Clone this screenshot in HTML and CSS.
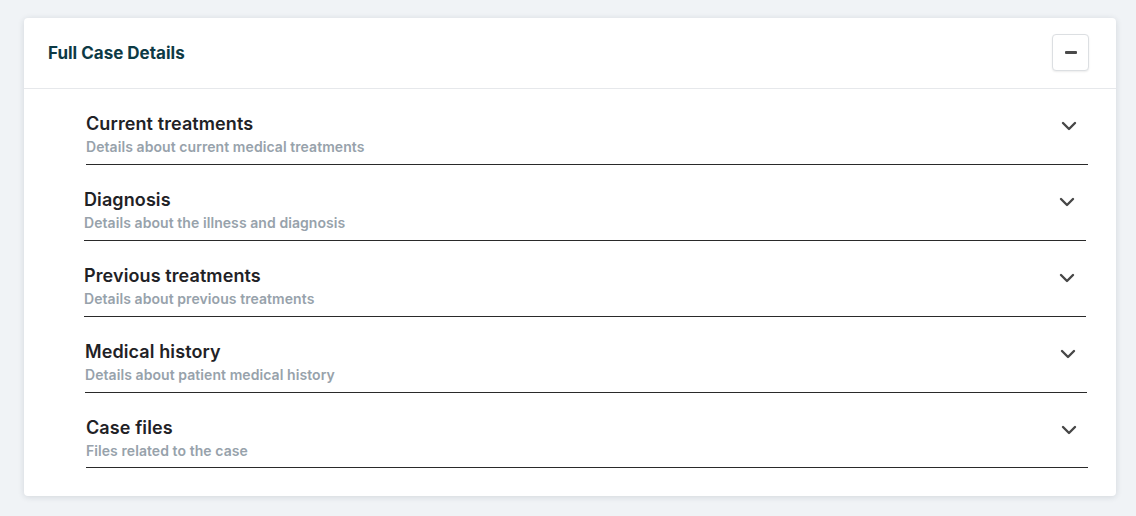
FILE: index.html
```html
<!DOCTYPE html>
<html lang="en">
<head>
<meta charset="utf-8">
<title>Full Case Details</title>
<link rel="stylesheet" href="styles.css">
</head>
<body>
<section class="card">
  <header class="card-header">
    <h2 class="card-title">Full Case Details</h2>
    <button class="collapse-btn" type="button" aria-label="Collapse"><span class="minus"></span></button>
  </header>
  <div class="sections">
    <div class="section">
      <div class="section-text">
        <div class="section-title">Current treatments</div>
        <div class="section-sub">Details about current medical treatments</div>
      </div>
      <svg class="chevron" viewBox="0 0 16 10" width="16" height="10"><path d="M2 2l6 6 6-6"/></svg>
    </div>
    <div class="section shift-2">
      <div class="section-text">
        <div class="section-title">Diagnosis</div>
        <div class="section-sub">Details about the illness and diagnosis</div>
      </div>
      <svg class="chevron" viewBox="0 0 16 10" width="16" height="10"><path d="M2 2l6 6 6-6"/></svg>
    </div>
    <div class="section shift-2">
      <div class="section-text">
        <div class="section-title">Previous treatments</div>
        <div class="section-sub">Details about previous treatments</div>
      </div>
      <svg class="chevron" viewBox="0 0 16 10" width="16" height="10"><path d="M2 2l6 6 6-6"/></svg>
    </div>
    <div class="section shift-1">
      <div class="section-text">
        <div class="section-title">Medical history</div>
        <div class="section-sub">Details about patient medical history</div>
      </div>
      <svg class="chevron" viewBox="0 0 16 10" width="16" height="10"><path d="M2 2l6 6 6-6"/></svg>
    </div>
    <div class="section section-last">
      <div class="section-text">
        <div class="section-title">Case files</div>
        <div class="section-sub">Files related to the case</div>
      </div>
      <svg class="chevron" viewBox="0 0 16 10" width="16" height="10"><path d="M2 2l6 6 6-6"/></svg>
    </div>
  </div>
</section>
</body>
</html>
```

FILE: styles.css
```css
* { box-sizing: border-box; }

html, body {
  margin: 0;
  background: #f0f3f6;
}

body {
  padding: 18px 20px 20px 24px;
  font-family: Inter, "Noto Sans", sans-serif;
}

.card {
  background: #ffffff;
  border-radius: 4px;
  box-shadow: 0 1px 6px rgba(30, 45, 60, 0.14);
  padding-bottom: 28px;
}

.card-header {
  height: 71px;
  display: flex;
  align-items: center;
  justify-content: space-between;
  padding: 0 27px 1px 24px;
  border-bottom: 1px solid #e6e8eb;
}

.card-title {
  margin: 0;
  font-size: 17px;
  font-weight: 700;
  color: #0d3a45;
}

.collapse-btn {
  width: 37px;
  height: 37px;
  background: #fff;
  border: 1px solid #dcdfe2;
  border-radius: 4px;
  box-shadow: 0 1px 2px rgba(0, 0, 0, 0.08);
  display: flex;
  align-items: center;
  justify-content: center;
  padding: 0;
}

.minus {
  display: block;
  width: 12px;
  height: 3px;
  border-radius: 1px;
  background: #4a4a4a;
}

.sections {
  padding: 0 28px 0 62px;
}

.section {
  display: flex;
  align-items: flex-start;
  justify-content: space-between;
  padding: 25px 0 9px;
  border-bottom: 1px solid #2a2a2a;
}

.section-last { padding-bottom: 8px; }

.shift-2 { margin-left: -2px; margin-right: 2px; }
.shift-1 { margin-left: -1px; margin-right: 1px; }

.section-title {
  font-size: 18px;
  line-height: 20px;
  font-weight: 600;
  letter-spacing: 0.1px;
  color: #1f2226;
}

.section-sub {
  margin-top: 5px;
  font-size: 14px;
  line-height: 16px;
  font-weight: 600;
  letter-spacing: 0.07px;
  color: #97a2ab;
}

.chevron {
  margin: 7px 11px 0 0;
  fill: none;
  stroke: #474747;
  stroke-width: 2.4;
  stroke-linecap: round;
  stroke-linejoin: round;
}
```
